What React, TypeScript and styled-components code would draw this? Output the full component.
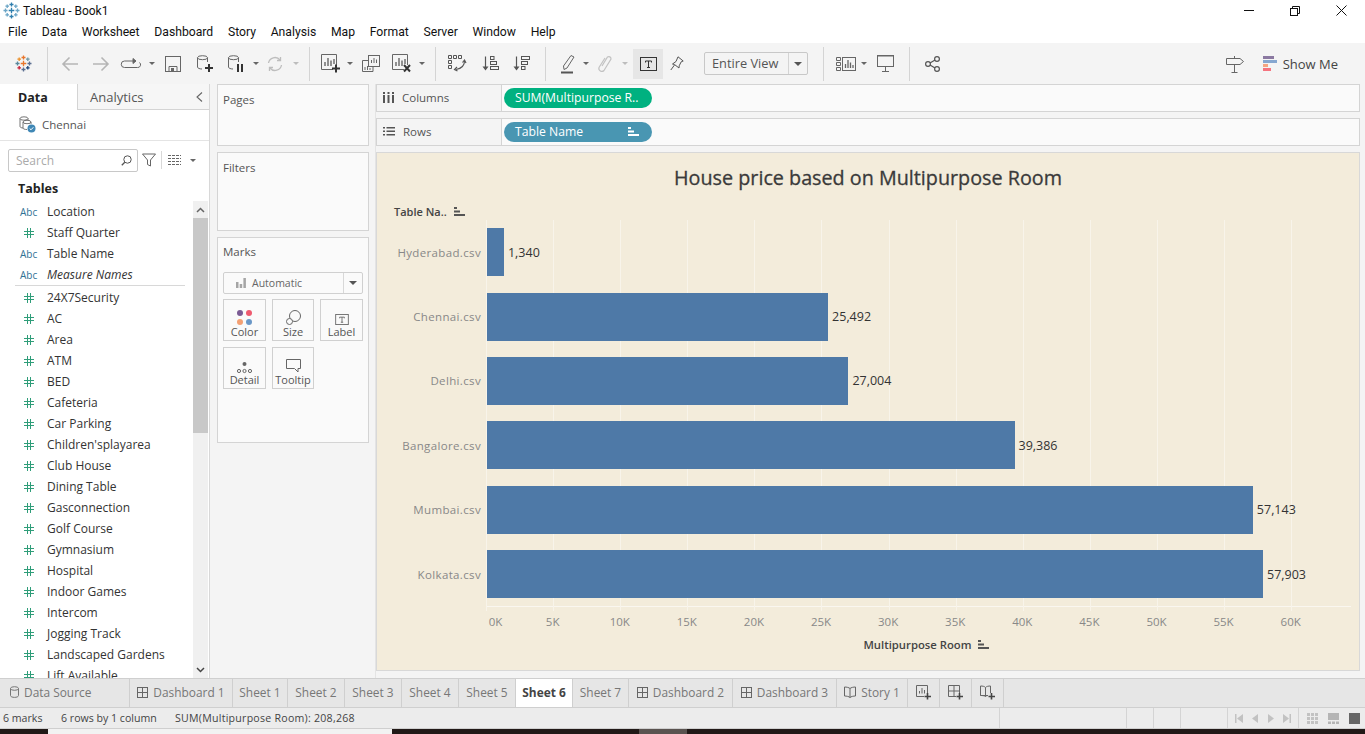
import React from "react";
import styled, { createGlobalStyle } from "styled-components";

const Global = createGlobalStyle`
  html, body { margin: 0; padding: 0; background: #fff; }
  body { font-family: "Open Sans", "Noto Sans", sans-serif; color: #333; overflow: hidden; }
  * { box-sizing: border-box; }
`;

const Shell = styled.div`
  width: 1365px;
  height: 734px;
  display: flex;
  flex-direction: column;
  overflow: hidden;
`;

const TitleBar = styled.div`
  height: 21px;
  flex: none;
  display: flex;
  align-items: center;
  padding-left: 3px;
  font-size: 12px;
  color: #111;
  font-family: Roboto, sans-serif;
`;
const TitleText = styled.span`
  margin-left: 3px;
`;
const WindowButtons = styled.div`
  margin-left: auto;
  display: flex;
  padding-right: 1px;
`;
const WinButton = styled.div`
  width: 46px;
  height: 21px;
  display: flex;
  align-items: center;
  justify-content: center;
`;

const MenuBar = styled.div`
  height: 22px;
  flex: none;
  display: flex;
  align-items: center;
  padding-left: 8px;
  gap: 14.7px;
  font-family: Roboto, sans-serif;
  font-size: 12.2px;
  color: #111;
`;

const Toolbar = styled.div`
  height: 41px;
  flex: none;
  background: #f4f4f4;
  display: flex;
  align-items: center;
`;
const Slot = styled.div<{ $w: number; $ml?: number; $active?: boolean }>`
  width: ${p => p.$w}px;
  margin-left: ${p => p.$ml || 0}px;
  height: 30px;
  flex: none;
  display: flex;
  align-items: center;
  justify-content: center;
  background: ${p => (p.$active ? "#e6e6e6" : "transparent")};
`;
const Caret = styled.div<{ $w: number; $light?: boolean }>`
  width: ${p => p.$w}px;
  flex: none;
  display: flex;
  justify-content: center;
  &::after {
    content: "";
    border-left: 3px solid transparent;
    border-right: 3px solid transparent;
    border-top: 3px solid ${p => (p.$light ? "#bdbdbd" : "#666")};
  }
`;
const ToolSep = styled.div<{ $ml?: number }>`
  width: 1px;
  height: 34px;
  flex: none;
  background: #d4d4d4;
  margin-left: ${p => p.$ml || 0}px;
`;
const FitSelect = styled.div`
  width: 104px;
  height: 23px;
  margin-left: 13px;
  flex: none;
  display: flex;
  align-items: center;
  border: 1px solid #c8c8c8;
  border-radius: 2px;
  font-size: 12.8px;
  color: #555;
`;
const FitLabel = styled.div`
  flex: 1;
  padding-left: 7px;
  border-right: 1px solid #d4d4d4;
  line-height: 21px;
`;
const FitArrow = styled.div`
  width: 18px;
  display: flex;
  justify-content: center;
  &::after {
    content: "";
    border-left: 4px solid transparent;
    border-right: 4px solid transparent;
    border-top: 4px solid #555;
  }
`;
const ToolRight = styled.div`
  margin-left: auto;
  display: flex;
  align-items: center;
  padding-right: 27px;
`;
const ShowMe = styled.div`
  display: flex;
  align-items: center;
  gap: 6px;
  margin-left: 19px;
  font-size: 13px;
  color: #444;
`;

const Main = styled.div`
  height: 594px;
  flex: none;
  display: flex;
  background: #f4f4f4;
`;

const DataPane = styled.div`
  width: 210px;
  flex: none;
  background: #fff;
  border-right: 1px solid #d8d8d8;
  display: flex;
  flex-direction: column;
`;
const PaneTabs = styled.div`
  height: 26px;
  flex: none;
  display: flex;
`;
const PaneTab = styled.div<{ $active?: boolean }>`
  width: ${p => (p.$active ? 77 : 132)}px;
  display: flex;
  align-items: center;
  justify-content: space-between;
  padding: 0 6px 0 ${p => (p.$active ? 18 : 12)}px;
  font-size: ${p => (p.$active ? 12.5 : 13)}px;
  font-weight: ${p => (p.$active ? 700 : 400)};
  color: ${p => (p.$active ? "#222" : "#555")};
  background: ${p => (p.$active ? "#fff" : "#f6f6f6")};
  border-left: ${p => (p.$active ? "none" : "1px solid #d4d4d4")};
  border-bottom: ${p => (p.$active ? "none" : "1px solid #d4d4d4")};
`;
const SourceRow = styled.div`
  height: 31px;
  flex: none;
  display: flex;
  align-items: center;
  gap: 6px;
  padding: 0 0 1px 19px;
  font-size: 11.5px;
  color: #555;
  border-bottom: 1px solid #e4e4e4;
`;
const SearchRow = styled.div`
  height: 22px;
  margin-top: 8px;
  flex: none;
  display: flex;
  align-items: center;
  padding-left: 8px;
`;
const SearchBox = styled.div`
  width: 130px;
  height: 23px;
  border: 1px solid #c8c8c8;
  border-radius: 2px;
  display: flex;
  align-items: center;
  justify-content: space-between;
  padding: 0 5px 0 7px;
  font-size: 12px;
  color: #aaa;
`;
const SearchTools = styled.div`
  display: flex;
  align-items: center;
  margin-left: 4px;
`;
const ToolDivider = styled.div`
  width: 1px;
  height: 18px;
  background: #d8d8d8;
  margin: 0 6px 0 5px;
`;
const TablesHeading = styled.div`
  height: 30px;
  flex: none;
  padding: 9px 0 0 18px;
  font-size: 12.5px;
  font-weight: 700;
  color: #222;
  line-height: 18px;
`;
const ListWrap = styled.div`
  flex: 1;
  min-height: 0;
  display: flex;
  overflow: hidden;
`;
const FieldList = styled.div`
  flex: 1;
  min-width: 0;
  overflow: hidden;
`;
const FieldRow = styled.div`
  height: 21px;
  display: flex;
  align-items: center;
  font-size: 12px;
  color: #333;
`;
const FieldIcon = styled.div<{ $abc?: boolean }>`
  width: 47px;
  flex: none;
  padding-left: ${p => (p.$abc ? 20 : 24)}px;
  font-size: 10px;
  color: #2f7295;
  display: flex;
  align-items: center;
`;
const FieldName = styled.span<{ $italic?: boolean }>`
  font-style: ${p => (p.$italic ? "italic" : "normal")};
  white-space: nowrap;
`;
const FieldDivider = styled.div`
  height: 1px;
  margin: 0 8px 1px 15px;
  background: #d8d8d8;
`;
const Scrollbar = styled.div`
  width: 15px;
  margin-right: 1px;
  flex: none;
  background: #f0f0f0;
  display: flex;
  flex-direction: column;
`;
const ScrollEnd = styled.div`
  height: 17px;
  flex: none;
  display: flex;
  align-items: center;
  justify-content: center;
`;
const ScrollThumb = styled.div`
  height: 215px;
  flex: none;
  background: #c8c8c8;
`;
const ScrollFill = styled.div`
  flex: 1;
`;

const CardsPane = styled.div`
  width: 166px;
  flex: none;
  padding: 0 6px 0 7px;
  display: flex;
  flex-direction: column;
  gap: 6px;
  border-right: 1px solid #e4e4e4;
`;
const Card = styled.div<{ $h: number; $pt?: number }>`
  height: ${p => p.$h}px;
  flex: none;
  background: #fafafa;
  border: 1px solid #d4d4d4;
  padding: ${p => p.$pt ?? 7}px 5px 0;
  font-size: 11.5px;
  color: #555;
`;
const MarkSelect = styled.div`
  height: 22px;
  margin-top: 13px;
  border: 1px solid #d0d0d0;
  border-radius: 2px;
  display: flex;
  align-items: center;
  font-size: 10.5px;
  color: #666;
`;
const MarkSelectLabel = styled.div`
  flex: 1;
  display: flex;
  align-items: center;
  gap: 6px;
  padding-left: 12px;
  border-right: 1px solid #d8d8d8;
  height: 20px;
`;
const MarkGrid = styled.div`
  display: grid;
  grid-template-columns: 43px 42px 43px;
  column-gap: 6px;
  row-gap: 6px;
  margin-top: 5px;
`;
const MarkBtn = styled.div`
  height: 42px;
  border: 1px solid #d0d0d0;
  display: flex;
  flex-direction: column;
  align-items: center;
  font-size: 11px;
  line-height: 14px;
  color: #555;
`;
const MarkIcon = styled.div`
  height: 25px;
  flex: none;
  display: flex;
  align-items: flex-end;
`;

const Workspace = styled.div`
  flex: 1;
  min-width: 0;
  padding-right: 5px;
  display: flex;
  flex-direction: column;
`;
const Shelf = styled.div<{ $mt: number }>`
  height: 28px;
  flex: none;
  margin-top: ${p => p.$mt}px;
  display: flex;
  background: #fafafa;
  border: 1px solid #d4d4d4;
`;
const ShelfLabel = styled.div`
  width: 125px;
  flex: none;
  display: flex;
  align-items: center;
  gap: 8px;
  padding: 0 0 2px 6px;
  font-size: 11.5px;
  color: #555;
  background: #f4f4f4;
  border-right: 1px solid #d4d4d4;
`;
const Pill = styled.div<{ $color: string }>`
  width: 148px;
  height: 20px;
  margin: 3px 0 0 2px;
  border-radius: 10px;
  background: ${p => p.$color};
  color: #fff;
  font-size: 12.2px;
  display: flex;
  align-items: center;
  justify-content: space-between;
  padding: 0 13px 1px 11px;
  white-space: nowrap;
`;

const View = styled.div`
  height: 519px;
  margin-top: 6px;
  flex: none;
  background: #f3ecdb;
  border: 1px solid #d8d8d8;
  display: flex;
  flex-direction: column;
`;
const ChartTitle = styled.div`
  height: 50px;
  flex: none;
  text-align: center;
  padding: 12px 0 0 0;
  font-size: 19.75px;
  -webkit-text-stroke: 0.3px #3a3a3a;
  line-height: 25px;
  color: #3a3a3a;
`;
const RowHeader = styled.div`
  height: 17px;
  flex: none;
  padding-left: 17px;
  display: flex;
  align-items: center;
  gap: 7px;
  font-size: 11px;
  font-weight: 600;
  color: #444;
`;
const PlotArea = styled.div`
  height: 387.4px;
  flex: none;
  margin-left: 109px;
  margin-right: 8px;
  position: relative;
  border-bottom: 1px solid #faf7f0;
  display: grid;
  grid-template-rows: repeat(6, 1fr);
`;
const GridLayer = styled.div`
  position: absolute;
  inset: 0 0 -5px 0;
  display: flex;
`;
const GridCell = styled.div`
  flex: 0 0 67.1px;
  border-left: 1px solid #f8f4ea;
`;
const BarRow = styled.div`
  position: relative;
  display: flex;
  align-items: center;
  padding-left: 1px;
`;
const RowLabel = styled.div`
  position: absolute;
  right: 100%;
  width: 109px;
  padding-right: 5px;
  text-align: right;
  font-size: 11.5px;
  letter-spacing: 0.35px;
  color: #888;
`;
const Bar = styled.div`
  height: 48px;
  background: #4e79a7;
`;
const BarValue = styled.span`
  margin-left: 4px;
  font-size: 12.5px;
  color: #333;
`;
const TickRow = styled.div`
  height: 22px;
  flex: none;
  margin-left: 75px;
  display: flex;
  align-items: flex-end;
`;
const Tick = styled.div<{ $first?: boolean }>`
  flex: 0 0 67.1px;
  text-align: center;
  padding-left: ${p => (p.$first ? 20 : 0)}px;
  font-size: 11.5px;
  color: #888;
`;
const AxisTitle = styled.div`
  height: 24px;
  padding: 7px 0 0 116px;
  flex: none;
  display: flex;
  align-items: center;
  justify-content: center;
  gap: 6px;
  font-size: 11.3px;
  font-weight: 600;
  color: #444;
`;

const TabBar = styled.div`
  height: 30px;
  flex: none;
  display: flex;
  background: #e6e6e6;
  border-top: 1px solid #cfcfcf;
  border-bottom: 1px solid #cfcfcf;
`;
const Tab = styled.div<{ $w: number; $active?: boolean; $start?: boolean }>`
  width: ${p => p.$w}px;
  flex: none;
  display: flex;
  align-items: center;
  justify-content: ${p => (p.$start ? "flex-start" : "center")};
  gap: 5px;
  padding: 0 0 2px ${p => (p.$start ? 10 : 0)}px;
  font-size: 11.9px;
  font-weight: ${p => (p.$active ? 700 : 400)};
  color: ${p => (p.$active ? "#444" : "#777")};
  background: ${p => (p.$active ? "#fff" : "transparent")};
  border-right: 1px solid #cfcfcf;
`;

const StatusBar = styled.div`
  height: 21px;
  flex: none;
  display: flex;
  align-items: center;
  background: #ececec;
  border-bottom: 1px solid #cfcfcf;
  font-size: 10.6px;
  color: #444;
`;
const StatusText = styled.span<{ $w: number; $ls?: number }>`
  width: ${p => p.$w}px;
  flex: none;
  white-space: nowrap;
  padding-left: 3px;
  letter-spacing: ${p => p.$ls || 0}px;
`;
const StatusCell = styled.div<{ $w?: number; $gap?: number; $pl?: number }>`
  width: ${p => (p.$w ? `${p.$w}px` : "auto")};
  flex: ${p => (p.$w ? "none" : "1")};
  height: 100%;
  display: flex;
  align-items: center;
  justify-content: center;
  gap: ${p => p.$gap || 0}px;
  padding-left: ${p => p.$pl || 0}px;
  border-left: 1px solid #d4d4d4;
`;
const StatusSpacer = styled.div`
  width: 627px;
  flex: none;
`;
const Taskbar = styled.div`
  flex: 1;
  display: flex;
  background: #211917;
`;
const TaskbarPiece = styled.div<{ $w: number; $color: string }>`
  width: ${p => p.$w}px;
  flex: none;
  background: ${p => p.$color};
`;

// icons
const Svg = styled.svg`
  display: block;
  flex: none;
  overflow: visible;
`;

const Cross = ({ x, y, c, r }: { x: number; y: number; c: string; r: number }) => (
  <path d={`M${x - r} ${y}H${x + r}M${x} ${y - r}V${y + r}`} stroke={c} strokeWidth="1.3" fill="none" />
);
const TableauLogo = ({ mono }: { mono?: boolean }) => {
  const big = mono ? "#2f7fae" : "";
  const small = mono ? "#6aa5c6" : "";
  return (
    <Svg width="17" height="17" viewBox="0 0 17 17">
      <Cross x={8.5} y={2.5} c={big || "#e8762c"} r={2} />
      <Cross x={8.5} y={14.5} c={big || "#5b6f91"} r={2} />
      <Cross x={2.5} y={8.5} c={small || "#59879b"} r={2} />
      <Cross x={14.5} y={8.5} c={small || "#5b6f91"} r={2} />
      <Cross x={8.5} y={8.5} c={big || "#e8762c"} r={2.8} />
      <Cross x={4.2} y={4.2} c={small || "#eb912b"} r={1.8} />
      <Cross x={12.8} y={4.2} c={small || "#7199a6"} r={1.8} />
      <Cross x={4.2} y={12.8} c={small || "#c72037"} r={1.8} />
      <Cross x={12.8} y={12.8} c={small || "#1f447a"} r={1.8} />
    </Svg>
  );
};
const Back = ({ flip }: { flip?: boolean }) => (
  <Svg width="18" height="16" viewBox="0 0 18 16" fill="none" stroke="#b5b5b5" strokeWidth="1.6" style={flip ? { transform: "scaleX(-1)" } : undefined}>
    <path d="M17 8H2M8.5 1.5 2 8l6.500 6.500" />
  </Svg>
);
const Loop = () => (
  <Svg width="20" height="12" viewBox="0 0 20 12" fill="none" stroke="#666" strokeWidth="1">
    <path d="M12 3H3.500a2.800 2.800 0 0 0 0 6.500h13a2.800 2.800 0 0 0 2-5" />
    <path d="M12 .5 15 3l-3 2.500z" fill="#666" />
  </Svg>
);
const Save = () => (
  <Svg width="16" height="16" viewBox="0 0 16 16" fill="none" stroke="#666">
    <rect x=".5" y=".5" width="15" height="15" />
    <path d="M4 15V10.500h8V15" />
    <rect x="6" y="12" width="3" height="3" fill="#666" stroke="none" />
  </Svg>
);
const Drum = ({ children }: { children?: React.ReactNode }) => (
  <Svg width="18" height="18" viewBox="0 0 18 18" fill="none" stroke="#666">
    <ellipse cx="6.500" cy="2.700" rx="5" ry="2" />
    <path d="M1.500 2.700V12c0 1.200 2 2 4.500 2M11.500 2.700V7" />
    {children}
  </Svg>
);
const PlusMark = () => <path d="M13 9v8M9 13h8" stroke="#333" strokeWidth="2" />;
const Refresh = () => (
  <Svg width="16" height="16" viewBox="0 0 16 16" fill="none" stroke="#bdbdbd" strokeWidth="1.3">
    <path d="M1.500 7a6.500 6.500 0 0 1 11.500-3M14.500 9A6.500 6.500 0 0 1 3 12" />
    <path d="M13.500 1v3.500H10M2.500 15v-3.500H6" />
  </Svg>
);
const SheetChart = ({ mark }: { mark?: "plus" | "x" }) => (
  <Svg width="20" height="20" viewBox="0 0 20 20" fill="none" stroke="#666">
    <path d="M12 15.500H.5V.5h15V11" />
    <path d="M4 12V8M7 12V4M10 12V6.500M13 10V5" strokeWidth="1.400" />
    {mark === "plus" && <path d="M15 10.500v8M11 14.500h8" stroke="#333" strokeWidth="2" />}
    {mark === "x" && <path d="m12 11 6 6.500M18 11l-6 6.500" stroke="#333" strokeWidth="2" />}
  </Svg>
);
const Duplicate = () => (
  <Svg width="18" height="18" viewBox="0 0 18 18" fill="none" stroke="#666">
    <rect x="6.500" y=".5" width="11" height="11" fill="#f4f4f4" />
    <path d="M9.500 8V5M12 8V3M14.500 8V4.500" />
    <path d="M6.500 5.500H.5v11H11v-5" />
    <path d="M3 15v-3M5.500 15v-4M8 15v-2" />
  </Svg>
);
const Swap = () => (
  <Svg width="18" height="17" viewBox="0 0 18 17" fill="none" stroke="#555">
    <path d="M.5.500h3v3h-3zM5.500.500h3v3h-3zM10.500.500h3v3h-3zM.5 5.500h3v3h-3zM.5 10.500h3v3h-3z" />
    <path d="M16.500 6c0 4-3 7.500-8.500 8.500" strokeWidth="1.200" />
    <path d="M14.500 7.500 16.500 5l1.500 3M9 12l-2.500 2.500 3 1.500" strokeWidth="1.200" />
  </Svg>
);
const SortIcon = ({ desc }: { desc?: boolean }) => (
  <Svg width="17" height="16" viewBox="0 0 17 16" fill="none" stroke="#555">
    <path d="M3.500 .5v12" strokeWidth="1.200" />
    <path d="M.5 10.500h6l-3 4z" fill="#555" stroke="none" />
    {desc ? (
      <>
        <rect x="8.500" y=".5" width="8" height="3" />
        <rect x="8.500" y="5.500" width="6" height="3" />
        <rect x="8.500" y="10.500" width="3.500" height="3" />
      </>
    ) : (
      <>
        <rect x="8.500" y=".5" width="3.500" height="3" />
        <rect x="8.500" y="5.500" width="6" height="3" />
        <rect x="8.500" y="10.500" width="8" height="3" />
      </>
    )}
  </Svg>
);
const Highlighter = () => (
  <Svg width="14" height="20" viewBox="0 0 14 20" fill="none" stroke="#666">
    <path d="M10 1.500 13 3 6 14l-3 1.500-.5-3.500z" />
    <path d="M0 18.500h12" stroke="#555" strokeWidth="2" />
  </Svg>
);
const Clip = () => (
  <Svg width="14" height="19" viewBox="0 0 14 19" fill="none" stroke="#c2c2c2" strokeWidth="1.200">
    <path d="M4 12 9.500 3a2.200 2.200 0 0 1 3.500 2L6 16.500a3 3 0 0 1-5-3L7 4" />
  </Svg>
);
const TBox = ({ size = 17, dark }: { size?: number; dark?: boolean }) => (
  <Svg width={size} height={size - 3} viewBox="0 0 17 14" fill="none" stroke={dark ? "#333" : "#555"}>
    <rect x=".5" y=".5" width="16" height="13" />
    <path d="M5.500 5.500V4h6v1.500M8.500 4v6.500M7 10.500h3" />
  </Svg>
);
const Pin = () => (
  <Svg width="14" height="15" viewBox="0 0 14 15" fill="none" stroke="#555">
    <path d="M8 .8 13.200 5l-2 .8-2 4L9 12 4.500 8.500 2.500 8 6 5.500z" />
    <path d="M4.500 9 .8 14" />
  </Svg>
);
const ShowMeChart = () => (
  <Svg width="20" height="14" viewBox="0 0 20 14" fill="none" stroke="#666">
    <path d="M.5.500h4v3h-4zM.5 5.500h4v3h-4zM.5 10.500h4v3h-4z" />
    <rect x="6.500" y=".5" width="13" height="13" />
    <path d="M9.500 11V7M12 11V3M14.500 11V5.500M17 11V8" strokeWidth="1.300" />
  </Svg>
);
const Presentation = () => (
  <Svg width="17" height="17" viewBox="0 0 17 17" fill="none" stroke="#666">
    <rect x=".5" y=".5" width="16" height="11" />
    <path d="M0 1h17M8.500 11.500V16M5 16.500h7" />
  </Svg>
);
const Share = () => (
  <Svg width="15" height="16" viewBox="0 0 15 16" fill="none" stroke="#555" strokeWidth="1.200">
    <circle cx="3" cy="8" r="2.400" />
    <circle cx="12" cy="3" r="2.400" />
    <circle cx="12" cy="13" r="2.400" />
    <path d="m5 7 5-3M5 9l5 3" />
  </Svg>
);
const SignPost = () => (
  <Svg width="18" height="18" viewBox="0 0 18 18" fill="none" stroke="#666">
    <path d="M.5 3.500h13.500L17.500 6.500 14 9.500H.5zM8.500 1v2.500M8.500 9.500V17M5.500 17.500h6" />
  </Svg>
);
const ShowMeBars = () => (
  <Svg width="14" height="15" viewBox="0 0 14 15">
    <rect width="11" height="3" fill="#8b79a1" />
    <rect y="4" width="14" height="3" fill="#86a7d0" />
    <rect y="8" width="5" height="3" fill="#f4a582" />
    <rect y="12" width="8" height="3" fill="#f5747f" />
  </Svg>
);
const Funnel = () => (
  <Svg width="14" height="14" viewBox="0 0 14 14" fill="none" stroke="#666">
    <path d="M.5 1h13L8.500 7v6l-3-1.500V7z" />
  </Svg>
);
const Magnifier = () => (
  <Svg width="11" height="11" viewBox="0 0 11 11" fill="none" stroke="#555">
    <circle cx="6.500" cy="4.500" r="3.700" />
    <path d="M3.800 7.200.8 10.200" strokeWidth="1.300" />
  </Svg>
);
const ListGrid = () => (
  <Svg width="13" height="10" viewBox="0 0 13 10" stroke="#666">
    <path d="M0 .5h13M0 3.500h13M0 6.500h13M0 9.500h13" strokeDasharray="3 1" />
  </Svg>
);
const SourceIcon = () => (
  <Svg width="17" height="17" viewBox="0 0 17 17" fill="none" stroke="#666" strokeWidth=".9">
    <ellipse cx="5" cy="2.500" rx="4" ry="1.700" />
    <path d="M1 2.500v8c0 .8 1.500 1.500 3 1.500M9 2.500V4" />
    <ellipse cx="8" cy="6" rx="4" ry="1.700" fill="#fff" />
    <path d="M4 6v6c0 .8 1.500 1.500 4 1.500M12 6v2" />
    <circle cx="12.500" cy="12.500" r="4" fill="#3f87b5" stroke="none" />
    <path d="m10.700 12.500 1.300 1.300 2.300-2.500" stroke="#fff" strokeWidth="1" />
  </Svg>
);
const Hash = () => (
  <Svg width="10" height="10" viewBox="0 0 10 10" fill="none" stroke="#2f9d79">
    <path d="M3.500 0v10M6.500 0v10M0 3.500h10M0 6.500h10" />
  </Svg>
);
const Chevron = ({ up, dark }: { up?: boolean; dark?: boolean }) => (
  <Svg width="9" height="6" viewBox="0 0 9 6" fill="none" stroke={dark ? "#444" : "#666"} strokeWidth="1.500">
    <path d={up ? "M1 5l3.500-3.500L8 5" : "M1 1l3.500 3.500L8 1"} />
  </Svg>
);
const ChevronLeft = () => (
  <Svg width="7" height="10" viewBox="0 0 7 10" fill="none" stroke="#666" strokeWidth="1.100">
    <path d="M6 .5 1 5l5 4.500" />
  </Svg>
);
const SortBadge = ({ light }: { light?: boolean }) => (
  <Svg width="11" height="9" viewBox="0 0 11 9">
    <rect width="3" height="2" fill={light ? "#fff" : "#555"} />
    <rect y="3.500" width="6" height="2" fill={light ? "#fff" : "#555"} />
    <rect y="7" width="11" height="2" fill={light ? "#fff" : "#555"} />
  </Svg>
);
const Bars3 = () => (
  <Svg width="11" height="11" viewBox="0 0 11 11" fill="#555">
    <rect width="2" height="2" />
    <rect y="3" width="2" height="8" />
    <rect x="4.500" width="2" height="2" />
    <rect x="4.500" y="3" width="2" height="8" />
    <rect x="9" width="2" height="2" />
    <rect x="9" y="3" width="2" height="8" />
  </Svg>
);
const Lines3 = () => (
  <Svg width="12" height="9" viewBox="0 0 12 9" fill="#555">
    <path d="M0 0h2v1.500H0zM0 3.500h2V5H0zM0 7h2v1.500H0zM3.500 0H12v1.500H3.500zM3.500 3.500H12V5H3.500zM3.500 7H12v1.500H3.500z" />
  </Svg>
);
const AutoBars = () => (
  <Svg width="10" height="10" viewBox="0 0 10 10" fill="#a5a5a5">
    <rect y="4" width="2.500" height="6" />
    <rect x="3.700" y="6" width="2.500" height="4" />
    <rect x="7.400" width="2.500" height="10" />
  </Svg>
);
const ColorDots = () => (
  <Svg width="15" height="15" viewBox="0 0 15 15">
    <circle cx="3" cy="3" r="3" fill="#7b5b94" />
    <circle cx="12" cy="3" r="3" fill="#ee5a6f" />
    <circle cx="3" cy="12" r="3" fill="#f4a073" />
    <circle cx="12" cy="12" r="3" fill="#6a97c7" />
  </Svg>
);
const SizeRings = () => (
  <Svg width="15" height="15" viewBox="0 0 15 15" fill="none" stroke="#666">
    <circle cx="9" cy="6" r="5.500" />
    <circle cx="3.500" cy="11.500" r="3" fill="#fafafa" />
  </Svg>
);
const DetailDots = () => (
  <Svg width="15" height="11" viewBox="0 0 15 11" fill="none" stroke="#666">
    <circle cx="7.500" cy="2" r="2" fill="#666" stroke="none" />
    <circle cx="2" cy="9" r="1.600" />
    <circle cx="7.500" cy="9" r="1.600" />
    <circle cx="13" cy="9" r="1.600" />
  </Svg>
);
const TooltipBubble = () => (
  <Svg width="15" height="14" viewBox="0 0 15 14" fill="none" stroke="#666">
    <path d="M.5.500h14v9H12V13L8.500 9.500H.5z" />
  </Svg>
);
const DataTabIcon = () => (
  <Svg width="9" height="12" viewBox="0 0 9 12" fill="none" stroke="#777">
    <path d="M.5 2.500v7c0 2.500 8 2.500 8 0v-7" />
    <ellipse cx="4.500" cy="2.500" rx="4" ry="1.800" />
  </Svg>
);
const DashIcon = () => (
  <Svg width="11" height="11" viewBox="0 0 11 11" fill="none" stroke="#666">
    <rect x=".5" y=".5" width="10" height="10" />
    <path d="M5.500 0v11M0 5.500h11" />
  </Svg>
);
const StoryIcon = () => (
  <Svg width="12" height="12" viewBox="0 0 12 12" fill="none" stroke="#666">
    <path d="M6 2.500C5 1.500 2.500 1 .5 1v9c2 0 4.500.5 5.500 1.500 1-1 3.500-1.500 5.500-1.500V1C9.500 1 7 1.500 6 2.500zM6 2.500v9" />
  </Svg>
);
const NewSheet = () => (
  <Svg width="15" height="15" viewBox="0 0 15 15" fill="none" stroke="#666">
    <path d="M8 11.500H.5V.5h11V8" />
    <path d="M3.500 8.500V6M6 8.500V3M8.500 8.500V5" />
    <path d="M11.500 8v6.500M8.500 11.500h6.500" stroke="#444" strokeWidth="1.600" />
  </Svg>
);
const NewDash = () => (
  <Svg width="15" height="15" viewBox="0 0 15 15" fill="none" stroke="#666">
    <path d="M8 11.500H.5V.5h11V8M6 0v11.500M0 6h11.500" />
    <path d="M11.500 8v6.500M8.500 11.500h6.500" stroke="#444" strokeWidth="1.600" />
  </Svg>
);
const NewStory = () => (
  <Svg width="15" height="15" viewBox="0 0 15 15" fill="none" stroke="#666">
    <path d="M.5 1c2 0 4 .3 5 1.500 1-1.200 3-1.500 5-1.500v7M8 10.500c-1 0-2 .3-2.500 1-1-.8-3-1-5-1zM.5 1v9.500M5.500 2.500v9" />
    <path d="M11.500 8v6.500M8.500 11.500h6.500" stroke="#444" strokeWidth="1.600" />
  </Svg>
);
const Nav = ({ d }: { d: string }) => (
  <Svg width="8" height="9" viewBox="0 0 8 9">
    <path d={d} fill="#c2c2c2" />
  </Svg>
);
const Restore = () => (
  <Svg width="10" height="10" viewBox="0 0 10 10" fill="none" stroke="#111">
    <rect x=".5" y="2.500" width="7" height="7" />
    <path d="M2.500 2.500V.5h7v7H7.500" />
  </Svg>
);
const ViewFit = ({ variant }: { variant: number }) => (
  <Svg width="11" height="11" viewBox="0 0 11 11">
    {variant === 0 && (
      <path d="M0 0h3v3H0zM4 0h3v3H4zM8 0h3v3H8zM0 4h3v3H0zM4 4h3v3H4zM8 4h3v3H8zM0 8h3v3H0zM4 8h3v3H4zM8 8h3v3H8z" fill="#c2c2c2" />
    )}
    {variant === 1 && <path d="M0 0h11v7H0zM0 8.500h3V11H0zM4 8.500h3V11H4zM8 8.500h3V11H8z" fill="#b5b5b5" />}
    {variant === 2 && <path d="M0 0h11v11H0z" fill="#666" />}
  </Svg>
);

const topFields: [string, boolean, boolean?][] = [
  ["Location", true],
  ["Staff Quarter", false],
  ["Table Name", true],
  ["Measure Names", true, true],
];
const fields = [
  "24X7Security", "AC", "Area", "ATM", "BED", "Cafeteria", "Car Parking", "Children'splayarea",
  "Club House", "Dining Table", "Gasconnection", "Golf Course", "Gymnasium", "Hospital",
  "Indoor Games", "Intercom", "Jogging Track", "Landscaped Gardens", "Lift Available",
];
const chartRows: [string, number][] = [
  ["Hyderabad.csv", 1340],
  ["Chennai.csv", 25492],
  ["Delhi.csv", 27004],
  ["Bangalore.csv", 39386],
  ["Mumbai.csv", 57143],
  ["Kolkata.csv", 57903],
];
const ticks = ["0K", "5K", "10K", "15K", "20K", "25K", "30K", "35K", "40K", "45K", "50K", "55K", "60K"];
const pxPerUnit = 67.1 / 5000;

export default function App() {
  return (
    <Shell>
      <Global />
      <TitleBar>
        <TableauLogo mono />
        <TitleText>Tableau - Book1</TitleText>
        <WindowButtons>
          <WinButton>
            <Svg width="10" height="1" viewBox="0 0 10 1"><path d="M0 .5h10" stroke="#111" /></Svg>
          </WinButton>
          <WinButton><Restore /></WinButton>
          <WinButton>
            <Svg width="11" height="11" viewBox="0 0 11 11"><path d="M.5.500l10 10M10.500.500l-10 10" stroke="#111" /></Svg>
          </WinButton>
        </WindowButtons>
      </TitleBar>
      <MenuBar>
        {["File", "Data", "Worksheet", "Dashboard", "Story", "Analysis", "Map", "Format", "Server", "Window", "Help"].map(m => (
          <span key={m}>{m}</span>
        ))}
      </MenuBar>

      <Toolbar>
        <Slot $w={47}><TableauLogo /></Slot>
        <ToolSep />
        <Slot $w={32} $ml={6}><Back /></Slot>
        <Slot $w={30}><Back flip /></Slot>
        <Slot $w={30}><Loop /></Slot>
        <Caret $w={12} />
        <Slot $w={30}><Save /></Slot>
        <Slot $w={34}><Drum><PlusMark /></Drum></Slot>
        <Slot $w={28}><Drum><path d="M11 9v8M15 9v8" stroke="#333" strokeWidth="2" /></Drum></Slot>
        <Caret $w={12} />
        <Slot $w={26}><Refresh /></Slot>
        <Caret $w={16} $light />
        <ToolSep $ml={5} />
        <Slot $w={30} $ml={6}><SheetChart mark="plus" /></Slot>
        <Caret $w={8} />
        <Slot $w={34}><Duplicate /></Slot>
        <Slot $w={28}><SheetChart mark="x" /></Slot>
        <Caret $w={12} />
        <ToolSep $ml={7} />
        <Slot $w={30} $ml={6}><Swap /></Slot>
        <Slot $w={36}><SortIcon /></Slot>
        <Slot $w={26}><SortIcon desc /></Slot>
        <ToolSep $ml={11} />
        <Slot $w={28} $ml={8}><Highlighter /></Slot>
        <Caret $w={8} />
        <Slot $w={30}><Clip /></Slot>
        <Caret $w={10} $light />
        <Slot $w={30} $ml={3} $active><TBox dark /></Slot>
        <Slot $w={28}><Pin /></Slot>
        <FitSelect>
          <FitLabel>Entire View</FitLabel>
          <FitArrow />
        </FitSelect>
        <ToolSep $ml={15} />
        <Slot $w={28} $ml={8}><ShowMeChart /></Slot>
        <Caret $w={8} />
        <Slot $w={34}><Presentation /></Slot>
        <ToolSep $ml={7} />
        <Slot $w={28} $ml={8}><Share /></Slot>
        <ToolRight>
          <SignPost />
          <ShowMe><ShowMeBars />Show Me</ShowMe>
        </ToolRight>
      </Toolbar>

      <Main>
        <DataPane>
          <PaneTabs>
            <PaneTab $active>Data</PaneTab>
            <PaneTab>Analytics<ChevronLeft /></PaneTab>
          </PaneTabs>
          <SourceRow><SourceIcon />Chennai</SourceRow>
          <SearchRow>
            <SearchBox>Search<Magnifier /></SearchBox>
            <SearchTools>
              <Funnel />
              <ToolDivider />
              <ListGrid />
              <Caret $w={24} />
            </SearchTools>
          </SearchRow>
          <TablesHeading>Tables</TablesHeading>
          <ListWrap>
            <FieldList>
              {topFields.map(([name, abc, italic]) => (
                <FieldRow key={name}>
                  <FieldIcon $abc={abc}>{abc ? "Abc" : <Hash />}</FieldIcon>
                  <FieldName $italic={italic}>{name}</FieldName>
                </FieldRow>
              ))}
              <FieldDivider />
              {fields.map(name => (
                <FieldRow key={name}>
                  <FieldIcon><Hash /></FieldIcon>
                  <FieldName>{name}</FieldName>
                </FieldRow>
              ))}
            </FieldList>
            <Scrollbar>
              <ScrollEnd><Chevron up /></ScrollEnd>
              <ScrollThumb />
              <ScrollFill />
              <ScrollEnd><Chevron dark /></ScrollEnd>
            </Scrollbar>
          </ListWrap>
        </DataPane>

        <CardsPane>
          <Card $h={62}>Pages</Card>
          <Card $h={79}>Filters</Card>
          <Card $h={206} $pt={6}>
            Marks
            <MarkSelect>
              <MarkSelectLabel><AutoBars />Automatic</MarkSelectLabel>
              <FitArrow />
            </MarkSelect>
            <MarkGrid>
              <MarkBtn><MarkIcon><ColorDots /></MarkIcon>Color</MarkBtn>
              <MarkBtn><MarkIcon><SizeRings /></MarkIcon>Size</MarkBtn>
              <MarkBtn><MarkIcon><TBox size={14} /></MarkIcon>Label</MarkBtn>
              <MarkBtn><MarkIcon><DetailDots /></MarkIcon>Detail</MarkBtn>
              <MarkBtn><MarkIcon><TooltipBubble /></MarkIcon>Tooltip</MarkBtn>
            </MarkGrid>
          </Card>
        </CardsPane>

        <Workspace>
          <Shelf $mt={0}>
            <ShelfLabel><Bars3 />Columns</ShelfLabel>
            <Pill $color="#00b180">SUM(Multipurpose R..</Pill>
          </Shelf>
          <Shelf $mt={6}>
            <ShelfLabel><Lines3 />Rows</ShelfLabel>
            <Pill $color="#4996b2">Table Name<SortBadge light /></Pill>
          </Shelf>
          <View>
            <ChartTitle>House price based on Multipurpose Room</ChartTitle>
            <RowHeader>Table Na..<SortBadge /></RowHeader>
            <PlotArea>
              <GridLayer>
                {ticks.map(t => <GridCell key={t} />)}
              </GridLayer>
              {chartRows.map(([name, value]) => (
                <BarRow key={name}>
                  <RowLabel>{name}</RowLabel>
                  <Bar style={{ width: value * pxPerUnit - 1 }} />
                  <BarValue>{value.toLocaleString("en-US")}</BarValue>
                </BarRow>
              ))}
            </PlotArea>
            <TickRow>
              {ticks.map((t, i) => <Tick key={t} $first={i === 0}>{t}</Tick>)}
            </TickRow>
            <AxisTitle>Multipurpose Room<SortBadge /></AxisTitle>
          </View>
        </Workspace>
      </Main>

      <TabBar>
        <Tab $w={130} $start><DataTabIcon />Data Source</Tab>
        <Tab $w={103}><DashIcon />Dashboard 1</Tab>
        <Tab $w={55}>Sheet 1</Tab>
        <Tab $w={57}>Sheet 2</Tab>
        <Tab $w={57}>Sheet 3</Tab>
        <Tab $w={57}>Sheet 4</Tab>
        <Tab $w={57}>Sheet 5</Tab>
        <Tab $w={57} $active>Sheet 6</Tab>
        <Tab $w={56}>Sheet 7</Tab>
        <Tab $w={104}><DashIcon />Dashboard 2</Tab>
        <Tab $w={104}><DashIcon />Dashboard 3</Tab>
        <Tab $w={71}><StoryIcon />Story 1</Tab>
        <Tab $w={32}><NewSheet /></Tab>
        <Tab $w={32}><NewDash /></Tab>
        <Tab $w={32}><NewStory /></Tab>
      </TabBar>
      <StatusBar>
        <StatusText $w={58}>6 marks</StatusText>
        <StatusText $w={114}>6 rows by 1 column</StatusText>
        <StatusText $w={200} $ls={0.25}>SUM(Multipurpose Room): 208,268</StatusText>
        <StatusSpacer />
        <StatusCell />
        <StatusCell $w={27} />
        <StatusCell $w={27} />
        <StatusCell $w={47} />
        <StatusCell $w={71} $gap={8}>
          <Nav d="M0 0h1.500v9H0zM8 0v9L2 4.500z" />
          <Nav d="M7 0v9L1 4.500z" />
          <Nav d="M1 0v9l6-4.500z" />
          <Nav d="M8 0H6.500v9H8zM0 0v9l6-4.500z" />
        </StatusCell>
        <StatusCell $w={67} $gap={10} $pl={3}>
          <ViewFit variant={0} />
          <ViewFit variant={1} />
          <ViewFit variant={2} />
        </StatusCell>
      </StatusBar>
      <Taskbar>
        <TaskbarPiece $w={48} $color="#211917" />
        <TaskbarPiece $w={344} $color="#f2f2f2" />
        <TaskbarPiece $w={247} $color="#211917" />
        <TaskbarPiece $w={48} $color="#5a5350" />
      </Taskbar>
    </Shell>
  );
}
